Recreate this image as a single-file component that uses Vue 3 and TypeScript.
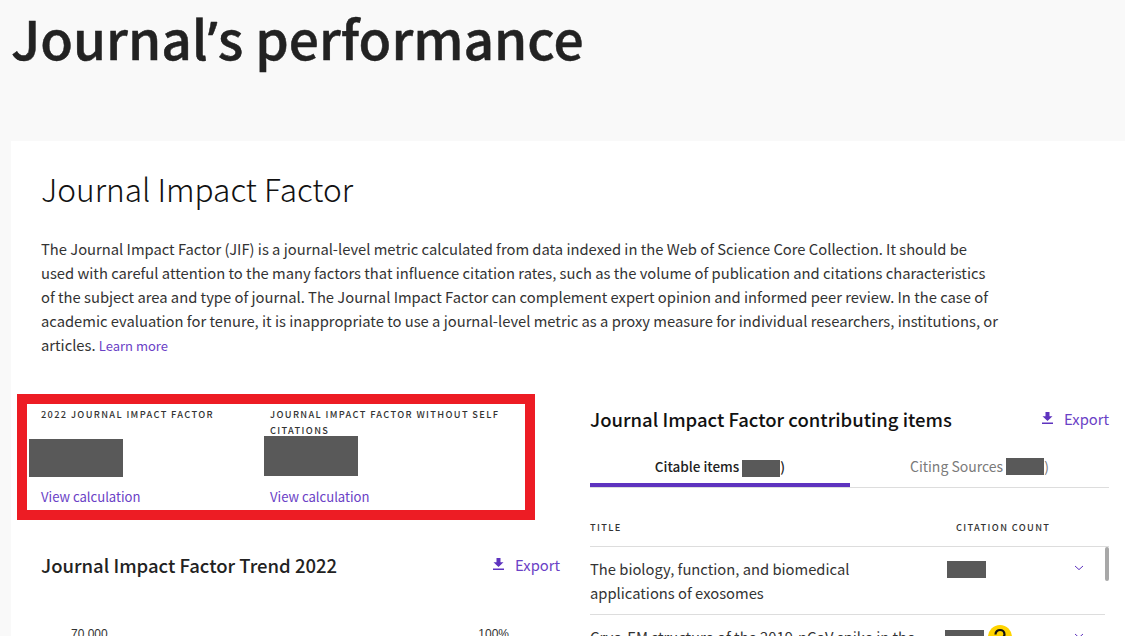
<script setup lang="ts">
const para = "The Journal Impact Factor (JIF) is a journal-level metric calculated from data indexed in the Web of Science Core Collection. It should be used with careful attention to the many factors that influence citation rates, such as the volume of publication and citations characteristics of the subject area and type of journal. The Journal Impact Factor can complement expert opinion and informed peer review. In the case of academic evaluation for tenure, it is inappropriate to use a journal-level metric as a proxy measure for individual researchers, institutions, or articles.";
</script>

<template>
  <div class="page">
    <h1 class="title">Journal<span class="apos">’</span>s performance</h1>
    <section class="card">
      <h2 class="sub">Journal Impact Factor</h2>
      <p class="para">{{ para }} <a class="more">Learn more</a></p>
      <div class="cols">
        <div class="left">
          <div class="redbox">
            <div class="metric m1">
              <div class="label">2022 JOURNAL IMPACT FACTOR</div>
              <div class="block b1"></div>
              <a class="calc">View calculation</a>
            </div>
            <div class="metric m2">
              <div class="label">JOURNAL IMPACT FACTOR WITHOUT SELF CITATIONS</div>
              <div class="block b2"></div>
              <a class="calc">View calculation</a>
            </div>
          </div>
          <div class="sechead trend">
            <h3>Journal Impact Factor Trend 2022</h3>
            <a class="export">
              <svg width="11" height="12" viewBox="0 0 11 12"><path d="M3.500 0h4v4.200h3L5.500 9 .5 4.200h3zM0 10.600h11V12H0z" fill="#5e33bf"/></svg>
              Export
            </a>
          </div>
          <div class="axis"><span>70,000</span><span>100%</span></div>
        </div>
        <div class="right">
          <div class="sechead">
            <h3 class="dark">Journal Impact Factor contributing items</h3>
            <a class="export">
              <svg width="11" height="12" viewBox="0 0 11 12"><path d="M3.500 0h4v4.200h3L5.500 9 .5 4.200h3zM0 10.600h11V12H0z" fill="#5e33bf"/></svg>
              Export
            </a>
          </div>
          <div class="tabs">
            <div class="tab active">Citable items <i class="blk tb"></i>)</div>
            <div class="tab">Citing Sources <i class="blk tb up"></i>)</div>
          </div>
          <div class="thead"><span class="th1">TITLE</span><span class="th2">CITATION COUNT</span></div>
          <div class="rows">
            <div class="row">
              <div class="rt">The biology, function, and biomedical applications of exosomes</div>
              <div class="rc"><i class="blk cnt"></i></div>
              <svg class="chev" width="10" height="6" viewBox="0 0 10 6"><path d="M1 1l4 3.600L9 1" fill="none" stroke="#5e33bf" stroke-width="1"/></svg>
            </div>
            <div class="row">
              <div class="rt">Cryo-EM structure of the 2019-nCoV spike in the prefusion conformation</div>
              <div class="rc second">
                <i class="blk cnt"></i>
                <span class="badge">
                  <svg width="24" height="24" viewBox="0 0 24 24"><circle cx="12" cy="12" r="12" fill="#ffd400"/><path d="M7.500 9.500c0-6 9-6 9 0 0 3-3.500 3.500-4.500 5v2" fill="none" stroke="#111" stroke-width="2.200"/></svg>
                </span>
              </div>
              <svg class="chev" width="10" height="6" viewBox="0 0 10 6"><path d="M1 1l4 3.600L9 1" fill="none" stroke="#5e33bf" stroke-width="1"/></svg>
            </div>
            <div class="thumb"></div>
          </div>
        </div>
      </div>
    </section>
  </div>
</template>

<style>
html, body { margin: 0; height: 636px; overflow: hidden; background: #f9f9f9; }
</style>

<style scoped>
.page {
  height: 636px;
  overflow: hidden;
  background: #f9f9f9;
  font-family: "Noto Sans CJK SC", "Noto Sans", sans-serif;
  color: #222;
}
.title {
  margin: 0;
  padding-left: 11px;
  height: 141px;
  font-size: 53.3px;
  line-height: 74px;
  font-weight: 500;
  -webkit-text-stroke: 0.5px #222;
  color: #222;
}
.apos { font-family: "Noto Sans", sans-serif; }
.card {
  background: #fff;
  margin-left: 11px;
  padding: 24px 16px 0 30px;
  height: 495px;
  box-sizing: border-box;
}
.sub {
  margin: 0;
  font-size: 31.6px;
  line-height: 46px;
  font-weight: 300;
  color: #111;
}
.para {
  margin: 26px 0 0;
  width: 960px;
  font-size: 14.75px;
  line-height: 24px;
  color: #333;
}
.more { font-size: 13px; color: #6a41c6; }
.cols {
  display: grid;
  grid-template-columns: 519px 519px;
  column-gap: 30px;
  margin-top: 36px;
}
.left { position: relative; }
.redbox {
  margin-left: -24px;
  width: 518px;
  height: 126px;
  box-sizing: border-box;
  border: 10px solid #ed1c24;
  display: flex;
}
.metric { position: relative; height: 106px; padding-top: 2px; box-sizing: border-box; }
.m1 { width: 243px; padding-left: 14px; }
.m2 { width: 255px; }
.label {
  font-size: 9.25px;
  line-height: 16px;
  letter-spacing: 1.35px;
  font-weight: 500;
  color: #333;
}
.block { position: absolute; background: #595959; }
.b1 { left: 2px; top: 35px; width: 94px; height: 38px; }
.b2 { left: -6px; top: 32px; width: 94px; height: 40px; }
.calc {
  position: absolute;
  left: 14px;
  bottom: 3px;
  font-size: 13.1px;
  line-height: 20px;
  color: #6a41c6;
}
.m2 .calc { left: 0; }
.sechead { display: flex; justify-content: space-between; align-items: center; height: 26px; margin-top: 12px; }
.trend { margin-top: 32px; }
h3 { margin: 0; font-size: 18.5px; line-height: 26px; font-weight: 500; color: #222; }
h3.dark { color: #111; }
.export { display: flex; align-items: center; gap: 11px; height: 24px; padding-bottom: 2px; font-size: 14.75px; color: #6a41c6; }
.axis {
  display: flex;
  justify-content: space-between;
  margin-top: 49px;
  padding: 0 51px 0 30px;
  font-family: "Liberation Sans", Arial, sans-serif;
  font-size: 12px;
  line-height: 14px;
  color: #333;
}
.tabs { display: flex; margin-top: 23px; height: 33px; box-sizing: border-box; border-bottom: 1px solid #ddd; }
.tab {
  width: 260px;
  text-align: center;
  font-size: 14px;
  line-height: 20px;
  color: #7a7a7a;
  padding-top: 1px;
  box-sizing: border-box;
  height: 32px;
}
.tab.active { color: #222; border-bottom: 4px solid #5e33bf; font-size: 13.5px; font-weight: 500; }
.tabs .tab:last-child { flex: 1; }
.blk { display: inline-block; background: #595959; }
.tb { width: 38px; height: 17px; vertical-align: -5px; }
.tb.up { vertical-align: -3px; }
.thead {
  position: relative;
  height: 59px;
  box-sizing: border-box;
  border-bottom: 1px solid #ddd;
  width: 519px;
  font-size: 9.25px;
  letter-spacing: 1.35px;
  font-weight: 500;
  color: #333;
}
.th1 { position: absolute; left: 0; top: 31px; line-height: 16px; }
.th2 { position: absolute; left: 366px; top: 31px; line-height: 16px; }
.rows { position: relative; width: 519px; }
.row {
  display: flex;
  width: 515px;
  height: 68px;
  box-sizing: border-box;
  border-bottom: 1px solid #ddd;
  padding-top: 11px;
  font-size: 14.75px;
  line-height: 24px;
  color: #333;
}
.rt { width: 330px; flex: none; margin-top: -1px; }
.rc { position: relative; width: 154px; flex: none; }
.cnt { width: 39px; height: 17px; position: absolute; left: 27px; top: 3px; }
.second .cnt { left: 25px; top: 4px; height: 20px; }
.badge { position: absolute; left: 68px; top: -1px; line-height: 0; }
.chev { margin-top: 7px; flex: none; }
.thumb {
  position: absolute;
  right: 0;
  top: 0;
  width: 4px;
  height: 34px;
  border-radius: 2px;
  background: #a8a8a8;
}
</style>
